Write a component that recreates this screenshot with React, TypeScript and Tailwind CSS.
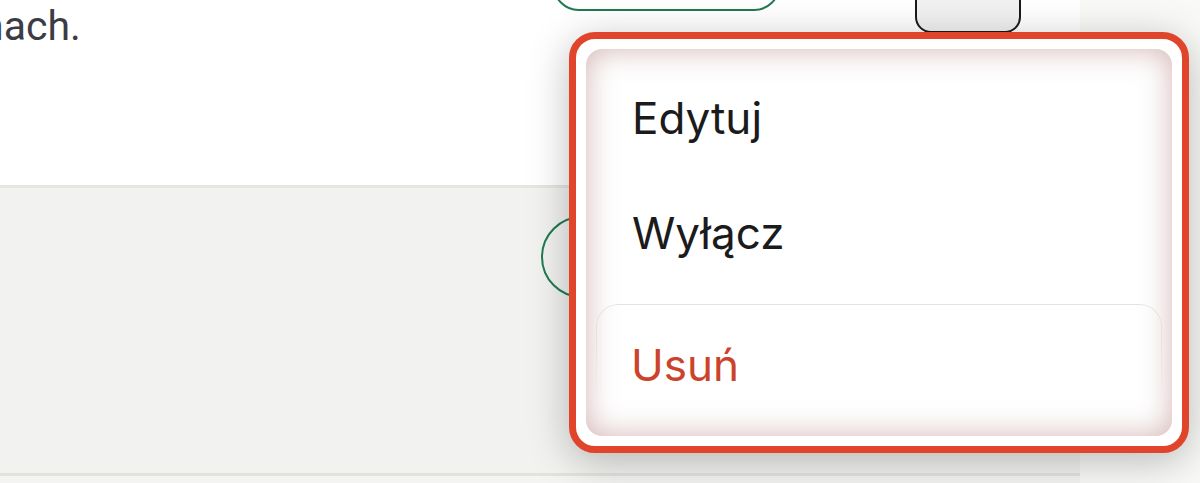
import React from 'react';

const menuItems = [
  { label: 'Edytuj', pt: 'pt-[47px]', pb: 'pb-[35px]' },
  { label: 'Wyłącz', pt: 'pt-[36px]', pb: 'pb-[49px]' },
];

function ActionsMenu() {
  return (
    <div className="absolute left-[569px] top-[32px] w-[620px] h-[421px] rounded-[26px] border-[7px] border-[#e0452b] bg-white p-[10px] shadow-[0_8px_40px_rgba(0,0,0,0.26)]">
      <div className="flex h-full flex-col overflow-hidden rounded-[16px] bg-white shadow-[inset_0_0_30px_rgba(170,105,105,0.5)] font-['Inter',sans-serif] text-[44px] leading-[44px]">
        {menuItems.map((item) => (
          <div key={item.label} className={`px-[46px] text-[#1b1b1b] ${item.pt} ${item.pb}`}>
            {item.label}
          </div>
        ))}
        {/* destructive item, highlighted */}
        <div className="relative mx-[10px] flex-1 pl-[35px] pt-[39px] text-[#cc432b]">
          <div className="pointer-events-none absolute inset-0 rounded-t-[22px] border border-b-0 border-[#e4e2dc] [mask-image:linear-gradient(to_bottom,black_25%,transparent_70%)]" />
          <span className="relative">Usuń</span>
        </div>
      </div>
    </div>
  );
}

export default function App() {
  return (
    <div className="relative flex h-[483px] w-[1200px] overflow-hidden bg-[#f9f9f8] font-['Roboto',sans-serif]">
      <div className="flex w-[1080px] flex-col">
        {/* top section */}
        <div className="relative h-[185px] bg-white">
          <p className="ml-[-19px] mt-[6px] text-[41px] leading-none text-[#3c3c44]">nach.</p>
          <div className="absolute left-[553px] top-[-40px] h-[51px] w-[227px] rounded-full border-2 border-[#1f7a50]" />
          <div className="absolute left-[915px] top-[-40px] h-[73px] w-[106px] rounded-[16px] border-2 border-[#1a1a1a] bg-[#f1f1f1]" />
        </div>
        <div className="h-[3px] bg-[#e6e6e1]" />
        {/* gray section */}
        <div className="relative h-[285px] bg-[#f2f2f0]">
          <div className="absolute left-[541px] top-[28px] flex h-[82px] w-[82px] items-center justify-center rounded-full border-2 border-[#1f7a50]">
            <div className="h-[8px] w-[8px] rounded-full bg-[#1f7a50]" />
          </div>
        </div>
        <div className="h-[3px] bg-[#e3e3de]" />
        <div className="flex-1 bg-[#f4f4f2]" />
      </div>
      <div className="flex-1" />
      <ActionsMenu />
    </div>
  );
}
